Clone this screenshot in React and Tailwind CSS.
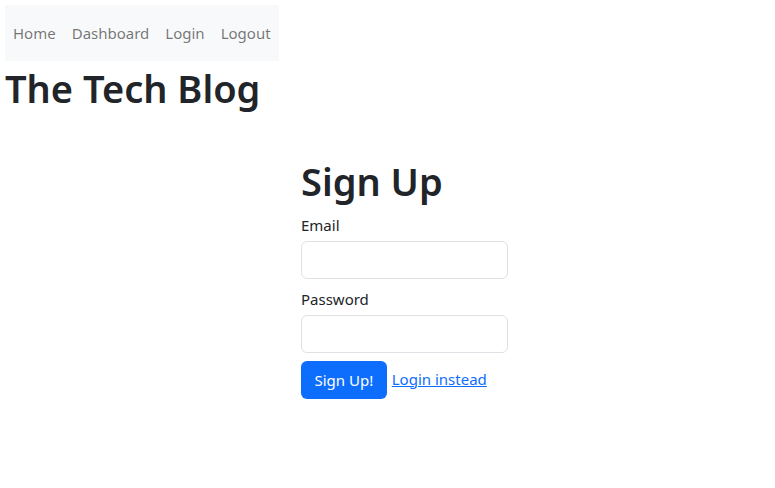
import React from 'react';

const App = () => {
  const links = ['Home', 'Dashboard', 'Login', 'Logout'];

  return (
    <div className="min-h-[488px] bg-white text-[#212529] font-['Noto_Sans',sans-serif] p-[5px]">
      <nav className="inline-flex items-center h-[56px] bg-[#f8f9fa]">
        <ul className="flex items-center">
          {links.map((l) => (
            <li key={l}>
              <a href="#" className="block px-2 text-[15px] leading-6 text-[#0000008c]">
                {l}
              </a>
            </li>
          ))}
        </ul>
      </nav>
      <h1 className="mt-[3px] text-[38px] leading-[48px] font-semibold">The Tech Blog</h1>

      <div className="ml-[296px] mt-[45px] w-[207px]">
        <h1 className="text-[38px] leading-[48px] font-semibold mb-2">Sign Up</h1>
        <form>
          <label className="block text-[15px] leading-6 mb-1">Email</label>
          <input
            type="email"
            className="block w-full h-[38px] rounded-[6px] border border-[#dee2e6] bg-white px-3 mb-2"
          />
          <label className="block text-[15px] leading-6 mb-1">Password</label>
          <input
            type="password"
            className="block w-full h-[38px] rounded-[6px] border border-[#dee2e6] bg-white px-3 mb-2"
          />
          <div className="flex items-center gap-[5px]">
            <button
              type="button"
              className="h-[38px] px-[13.5px] rounded-[6px] bg-[#0d6efd] text-white text-[15px] leading-6"
            >
              Sign Up!
            </button>
            <a href="#" className="text-[15px] leading-6 text-[#0d6efd] underline -mt-[3px]">
              Login instead
            </a>
          </div>
        </form>
      </div>
    </div>
  );
};

export default App;
